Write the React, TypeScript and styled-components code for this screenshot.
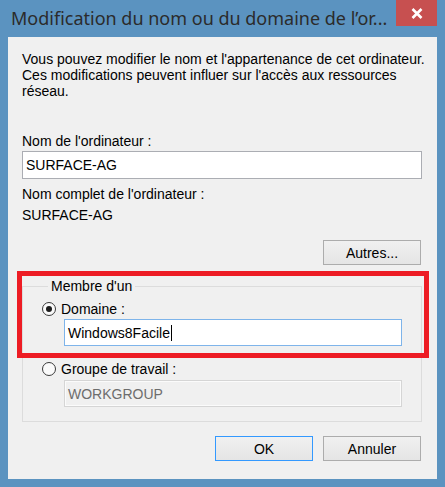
import React from "react";
import styled, { createGlobalStyle } from "styled-components";

const Global = createGlobalStyle`
  html, body {
    margin: 0;
    padding: 0;
    background: #5b93c0;
  }
  * { box-sizing: border-box; }
`;

const Window = styled.div`
  width: 445px;
  height: 487px;
  background: #5b93c0;
  display: flex;
  flex-direction: column;
`;

const TitleBar = styled.div`
  height: 37px;
  display: flex;
  align-items: flex-start;
  flex-shrink: 0;
`;

const Title = styled.div`
  margin-left: 11px;
  padding-top: 6px;
  font-family: "Noto Sans", "Open Sans", sans-serif;
  font-size: 18px;
  line-height: 24px;
  color: #2b2b2b;
  white-space: nowrap;
`;

const CloseButton = styled.div`
  margin-left: auto;
  margin-right: 8px;
  width: 41px;
  height: 26px;
  background: #c75050;
  display: flex;
  align-items: center;
  justify-content: center;
`;

const Body = styled.div`
  position: relative;
  margin: 0 8px;
  height: 442px;
  background: #f0f0f0;
  padding: 14px 15px 0 14px;
  font-family: "Liberation Sans", Arial, sans-serif;
  font-size: 14px;
  line-height: 16px;
  color: #000;
  display: flex;
  flex-direction: column;
`;

const Intro = styled.p`
  margin: 0;
  white-space: nowrap;
`;

const FieldLabel = styled.div<{ $top: number }>`
  margin-top: ${(p) => p.$top}px;
`;

const TextBox = styled.div<{ $state?: "normal" | "focus" | "disabled"; $indent?: number; $top?: number; $h?: number }>`
  margin-top: ${(p) => p.$top ?? 0}px;
  margin-left: ${(p) => p.$indent ?? 0}px;
  height: ${(p) => p.$h ?? 28}px;
  display: flex;
  align-items: center;
  padding: 0 3px;
  border: 1px solid
    ${(p) => (p.$state === "focus" ? "#7eb4ea" : p.$state === "disabled" ? "#d5d5d5" : "#abadb3")};
  background: ${(p) => (p.$state === "disabled" ? "#f0f0f0" : "#ffffff")};
  box-shadow: ${(p) => (p.$state === "disabled" ? "inset 0 0 0 1px #fbfbfb" : "none")};
  color: ${(p) => (p.$state === "disabled" ? "#6d6d6d" : "#000")};
  white-space: nowrap;
`;

const Caret = styled.span`
  display: inline-block;
  width: 1px;
  height: 16px;
  background: #000;
  margin-left: 1px;
`;

const InfoBlock = styled.div`
  margin-top: 5px;
  line-height: 21px;
`;

const ButtonRow = styled.div<{ $top: number }>`
  margin-top: ${(p) => p.$top}px;
  display: flex;
  justify-content: flex-end;
  gap: 10px;
  padding-right: 1px;
`;

const Button = styled.div<{ $default?: boolean }>`
  width: 98px;
  height: 25px;
  display: flex;
  align-items: center;
  justify-content: center;
  border: 1px solid ${(p) => (p.$default ? "#3399ff" : "#acacac")};
  background: linear-gradient(#f0f0f0, #e5e5e5);
  color: #000;
`;

const GroupBox = styled.fieldset`
  margin: 13px 0 0 0;
  padding: 7px 0 14px 19px;
  border: 1px solid #dcdcdc;
  min-width: 0;
`;

const Legend = styled.legend`
  margin-left: 6px;
  padding: 0 3px;
  line-height: 16px;
`;

const RadioRow = styled.div<{ $top?: number }>`
  margin-top: ${(p) => p.$top ?? 0}px;
  height: 16px;
  display: flex;
  align-items: center;
  gap: 5px;
`;

const Radio = styled.span<{ $checked?: boolean }>`
  width: 14px;
  height: 14px;
  border-radius: 50%;
  border: 1px solid #3a3a3a;
  background: #fafafa;
  display: flex;
  align-items: center;
  justify-content: center;
  flex-shrink: 0;
  &::after {
    content: "";
    display: ${(p) => (p.$checked ? "block" : "none")};
    width: 6px;
    height: 6px;
    border-radius: 50%;
    background: #1c1c1c;
  }
`;

const Highlight = styled.div`
  position: absolute;
  left: 9px;
  top: 234px;
  width: 412px;
  height: 87px;
  border: 5px solid #ed1c24;
  pointer-events: none;
`;

export default function App() {
  return (
    <>
      <Global />
      <Window>
        <TitleBar>
          <Title>Modification du nom ou du domaine de l’or...</Title>
          <CloseButton>
            <svg width="12" height="11" viewBox="0 0 12 11">
              <path d="M1.5 1 L10.5 10 M10.5 1 L1.5 10" stroke="#ffffff" strokeWidth="2.6" fill="none" />
            </svg>
          </CloseButton>
        </TitleBar>
        <Body>
          <Intro>
            Vous pouvez modifier le nom et l'appartenance de cet ordinateur.
            <br />
            Ces modifications peuvent influer sur l'accès aux ressources
            <br />
            réseau.
          </Intro>
          <FieldLabel $top={34}>Nom de l'ordinateur :</FieldLabel>
          <TextBox $top={2} $h={28}>SURFACE-AG</TextBox>
          <InfoBlock>
            Nom complet de l'ordinateur :
            <br />
            SURFACE-AG
          </InfoBlock>
          <ButtonRow $top={14}>
            <Button>Autres...</Button>
          </ButtonRow>
          <GroupBox>
            <Legend>Membre d'un</Legend>
            <RadioRow>
              <Radio $checked />
              <span>Domaine :</span>
            </RadioRow>
            <TextBox $state="focus" $indent={22} $top={2} $h={27} style={{ width: 338 }}>
              Windows8Facile
              <Caret />
            </TextBox>
            <RadioRow $top={15}>
              <Radio />
              <span>Groupe de travail :</span>
            </RadioRow>
            <TextBox $state="disabled" $indent={22} $top={3} $h={27} style={{ width: 338 }}>
              WORKGROUP
            </TextBox>
          </GroupBox>
          <ButtonRow $top={14}>
            <Button $default>OK</Button>
            <Button>Annuler</Button>
          </ButtonRow>
          <Highlight />
        </Body>
      </Window>
    </>
  );
}
